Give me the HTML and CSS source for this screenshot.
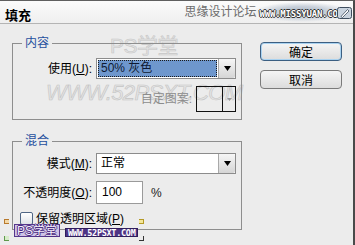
FILE: index.html
```html
<!DOCTYPE html>
<html lang="zh-CN">
<head>
<meta charset="utf-8">
<title>填充</title>
<link rel="stylesheet" href="styles.css">
</head>
<body>
<div class="dialog">
  <div class="wm-ps">PS学堂</div>
  <div class="wm-url">WWW.52PSXT.COM</div>

  <header class="titlebar">
    <span class="title">填充</span>
    <span class="brand">
      <span class="brand-cn">思缘设计论坛</span>
      <span class="brand-url">WWW.MISSYUAN.COM</span>
      <svg class="brand-icon" width="15" height="12" viewBox="0 0 15 12">
        <rect x="0.5" y="0.5" width="14" height="11" rx="2" fill="#c9d3de" stroke="#3e4d5e"/>
        <path d="M4 9.5 L10.5 2.5 L12 4 L5.5 10.5 Z" fill="#fff" stroke="#3e4d5e" stroke-width="0.8"/>
      </svg>
    </span>
  </header>

  <div class="main">
    <div class="groups">
      <fieldset class="group">
        <legend>内容</legend>
        <div class="group-body body-content">
          <div class="row">
            <span class="lbl">使用(<u>U</u>):</span>
            <div class="select">
              <span class="sel-value focused">50% 灰色</span>
              <span class="sel-arrow"><svg width="7" height="5" viewBox="0 0 7 5"><path d="M0 0H7L3.5 5Z" fill="#000"/></svg></span>
            </div>
          </div>
          <div class="pattern-row">
            <span class="lbl-dim">自定图案:</span>
            <div class="pattern">
              <span class="pattern-swatch"></span>
              <span class="pattern-arrow"><svg width="5" height="3" viewBox="0 0 5 3"><path d="M0 0H5L2.5 3Z" fill="#9a9a9a"/></svg></span>
            </div>
          </div>
        </div>
      </fieldset>

      <fieldset class="group">
        <legend>混合</legend>
        <div class="group-body body-mix">
          <div class="row row-mode">
            <span class="lbl">模式(<u>M</u>):</span>
            <div class="select">
              <span class="sel-value">正常</span>
              <span class="sel-arrow"><svg width="7" height="5" viewBox="0 0 7 5"><path d="M0 0H7L3.5 5Z" fill="#000"/></svg></span>
            </div>
          </div>
          <div class="row row-opacity">
            <span class="lbl">不透明度(<u>O</u>):</span>
            <div class="opacity">
              <span class="input">100</span>
              <span class="pct">%</span>
            </div>
          </div>
          <div class="check-row">
            <span class="checkbox"></span>
            <span class="check-label">保留透明区域(<u>P</u>)</span>
          </div>
        </div>
      </fieldset>
    </div>

    <div class="buttons">
      <span class="btn btn-default">确定</span>
      <span class="btn">取消</span>
    </div>
  </div>

  <div class="wm-bottom">
    <span class="mk mk-tl"></span>
    <span class="mk mk-bl"></span>
    <span class="mk mk-tr"></span>
    <span class="mk mk-br"></span>
    <span class="wmb-ps">PS学堂</span>
    <span class="wmb-url">WWW.52PSXT.COM</span>
  </div>
</div>
</body>
</html>
```
FILE: styles.css
```css
* { box-sizing: border-box; }
html, body { margin: 0; padding: 0; }
body {
  width: 355px;
  height: 245px;
  overflow: hidden;
  background: #ececec;
  font-family: "Liberation Sans", "Noto Sans CJK SC", sans-serif;
  font-size: 12px;
  line-height: 14px;
  color: #000;
}
u { text-decoration: underline; text-underline-offset: 1px; }

.dialog {
  position: relative;
  z-index: 0;
  width: 355px;
  height: 245px;
  border-top: 1px solid #5f5f5f;
  border-right: 2px solid #4a4a4a;
  background: #ececec;
}

/* watermarks under content */
.wm-ps {
  position: absolute;
  z-index: -1;
  left: 110px;
  top: 34px;
  font-size: 21px;
  line-height: 22px;
  color: #e3e3e3;
  -webkit-text-stroke: 0.6px #c6c6c6;
  letter-spacing: -0.5px;
}
.wm-url {
  position: absolute;
  z-index: -1;
  left: 46px;
  top: 80px;
  font-size: 22px;
  line-height: 24px;
  font-style: italic;
  color: #e4e4e4;
  -webkit-text-stroke: 0.6px #c4c4c4;
  letter-spacing: -0.6px;
}

/* title bar */
.titlebar {
  height: 23px;
  display: flex;
  align-items: flex-start;
  justify-content: space-between;
  padding: 0 1px 0 5px;
  background: linear-gradient(#fbfbfb, #efefef);
  border-bottom: 1px solid #b4b4b4;
}
.title {
  margin-top: 7px;
  font-size: 13px;
  line-height: 14px;
  font-weight: bold;
  font-family: "Noto Sans CJK SC", sans-serif;
}
.brand {
  display: flex;
  align-items: flex-start;
  height: 22px;
  background: radial-gradient(ellipse 48px 10px at 118px 11px, #a9b5c3 0%, #c8d0da 55%, rgba(236,236,236,0) 100%);
}
.brand-cn {
  margin-top: 3px;
  font-size: 12px;
  line-height: 14px;
  color: #6c6c6c;
  font-family: "Noto Sans CJK SC", sans-serif;
}
.brand-url {
  margin: 9px 0 0 3px;
  font-family: "DejaVu Sans Mono", monospace;
  font-size: 9px;
  line-height: 9px;
  font-weight: bold;
  color: #fff;
  letter-spacing: -0.2px;
  text-shadow: 1px 0 0 #333, -1px 0 0 #333, 0 1px 0 #333, 0 -1px 0 #333;
}
.brand-icon { margin: 6px 0 0 -6px; }

/* main */
.main {
  display: flex;
  padding: 12px 0 0 12px;
}
.groups {
  width: 230px;
  display: flex;
  flex-direction: column;
  gap: 14px;
}
.group {
  margin: 0;
  padding: 0;
  min-width: 0;
  border: 1px solid #8e8e8e;
}
.group legend {
  margin-left: 9px;
  padding: 0 3px;
  font-size: 12px;
  line-height: 14px;
  color: #1f4f9e;
}
.group-body {
  display: flex;
  flex-direction: column;
  padding-right: 5px;
}
.body-content { padding-top: 8px; padding-bottom: 7px; gap: 7px; }
.body-mix { padding-top: 5px; padding-bottom: 4px; }
.row-opacity { margin-top: 7px; }
.check-row { margin-top: 8px; }

.row {
  display: grid;
  grid-template-columns: 79px 1fr;
  column-gap: 4px;
  align-items: center;
}
.lbl { text-align: right; white-space: nowrap; }

.select {
  display: flex;
  height: 21px;
  border: 1px solid #8c8c8c;
  background: #fff;
}
.sel-value {
  flex: 1;
  margin: 1px;
  padding-left: 3px;
  line-height: 17px;
}
.sel-value.focused {
  background: #6e97cd;
  color: #0e1a33;
  outline: 1px dotted #1a1a1a;
  outline-offset: -1px;
}
.sel-arrow {
  width: 17px;
  display: flex;
  align-items: center;
  justify-content: center;
  border-left: 1px solid #a9a9a9;
  border-radius: 0 2px 2px 0;
  background: linear-gradient(#f6f6f6, #d5d5d5);
}

.pattern-row {
  display: flex;
  justify-content: flex-end;
  align-items: center;
  gap: 4px;
}
.lbl-dim { color: #8c8c8c; }
.pattern {
  display: flex;
  width: 40px;
  height: 26px;
  border: 1px solid #111;
}
.pattern-swatch {
  flex: 1;
  border-right: 1px solid #111;
}
.pattern-arrow {
  width: 12px;
  display: flex;
  align-items: center;
  justify-content: center;
}

.opacity {
  display: flex;
  align-items: center;
  gap: 8px;
}
.input {
  width: 47px;
  height: 23px;
  border: 1px solid #9a9a9a;
  background: #fff;
  padding-left: 5px;
  line-height: 21px;
}
.pct { color: #222; }

.check-row {
  display: flex;
  align-items: center;
  gap: 3px;
  padding-left: 7px;
  height: 13px;
}
.checkbox {
  width: 13px;
  height: 13px;
  border: 1px solid #4f6685;
  border-radius: 2px;
  background: linear-gradient(#ffffff, #dfe3e8);
}

/* buttons */
.buttons {
  margin-left: 18px;
  width: 82px;
  padding-top: 6px;
  display: flex;
  flex-direction: column;
  gap: 9px;
}
.btn {
  height: 19px;
  display: flex;
  align-items: center;
  justify-content: center;
  border: 1px solid #7a7a7a;
  border-radius: 4px;
  background: linear-gradient(#f5f5f5, #dcdcdc);
  font-family: "Noto Sans CJK SC", sans-serif;
  font-size: 12px;
  line-height: 14px;
}
.btn-default {
  border-color: #3c5f82;
  box-shadow: inset 0 0 0 1px #a9d2f0;
}

/* bottom watermark overlay */
.wm-bottom {
  position: absolute;
  z-index: 2;
  left: 4px;
  top: 218px;
  width: 140px;
  height: 24px;
  display: flex;
  align-items: flex-start;
  gap: 5px;
  padding: 5px 0 0 10px;
}
.mk {
  position: absolute;
  width: 5px;
  height: 5px;
}
.mk-tl { left: 0; top: 0; border: 1px solid #b8792c; border-right: 0; background: #f3d9a8; }
.mk-bl { left: 0; top: 17px; border-left: 1px solid #5f9a4c; border-bottom: 1px solid #5f9a4c; background: #d7ecc9; }
.mk-tr { right: 0; top: 0; border: 1px solid #b59a26; border-left: 0; background: #f4e79a; }
.mk-br { right: 0; top: 17px; border-right: 1px solid #333; border-bottom: 1px solid #333; }
.wmb-ps {
  height: 13px;
  padding: 0 2px;
  font-size: 12px;
  line-height: 13px;
  color: #f6f2fc;
  background: #cfc3e6;
  border: 1px solid #56378c;
  text-shadow: 1px 0 0 #4b2c83, -1px 0 0 #4b2c83, 0 1px 0 #4b2c83, 0 -1px 0 #4b2c83;
}
.wmb-url {
  margin-top: 4px;
  height: 9px;
  padding: 0 2px;
  font-family: "DejaVu Sans Mono", monospace;
  font-size: 8.5px;
  line-height: 9px;
  font-weight: bold;
  letter-spacing: -0.3px;
  color: #fff;
  background: #4e3485;
  border: 1px solid #2f1d5c;
}
```
